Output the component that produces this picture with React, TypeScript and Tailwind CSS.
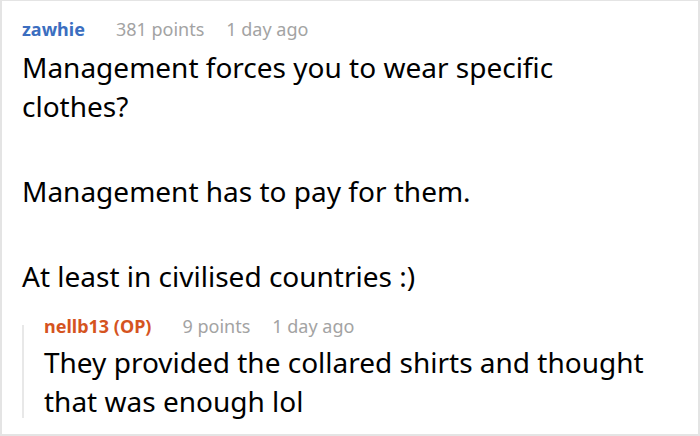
import React from "react";

type MetaProps = {
  user: string;
  points: string;
  time: string;
  op?: boolean;
};

const Meta: React.FC<MetaProps> = ({ user, points, time, op }) => (
  <div className="flex items-center text-[18px] leading-[24px]">
    <span
      className={
        op
          ? "font-bold text-[#d5541f] mr-[31px]"
          : "font-bold text-[#3b6ec0] mr-[31px]"
      }
    >
      {user}
    </span>
    <span className="text-[#a3a3a3] mr-[22px]">{points}</span>
    <span className="text-[#a3a3a3]">{time}</span>
  </div>
);

export default function App() {
  return (
    <div
      className="w-[700px] h-[436px] overflow-hidden bg-white border-t border-l-2 border-r-2 border-b-2 border-[#e4e4e4] text-black"
      style={{ fontFamily: '"Noto Sans", "Open Sans", sans-serif' }}
    >
      <div className="pl-[20px] pt-[16px]">
        <Meta user="zawhie" points="381 points" time="1 day ago" />
        <div className="mt-[7px] text-[28px] leading-[39px] space-y-[46px]">
          <p>
            Management forces you to wear specific
            <br />
            clothes?
          </p>
          <p>Management has to pay for them.</p>
          <p>At least in civilised countries :)</p>
        </div>

        <div className="flex mt-[18px]">
          <div className="w-[2px] bg-[#e8e8e8] mt-[11px] mb-[3px]" />
          <div className="pl-[20px]">
            <Meta user="nellb13 (OP)" points="9 points" time="1 day ago" op />
            <p className="mt-[5px] text-[28px] leading-[39px]">
              They provided the collared shirts and thought
              <br />
              that was enough lol
            </p>
          </div>
        </div>
      </div>
    </div>
  );
}
